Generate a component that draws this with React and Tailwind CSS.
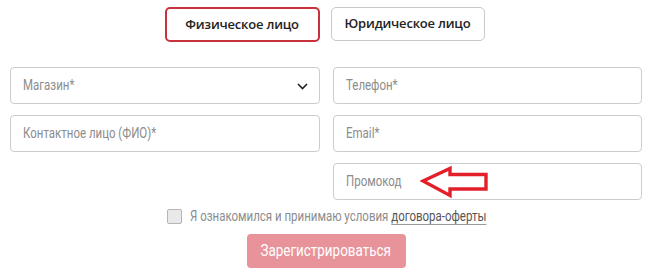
import React, { useState } from "react";

const base = { fontFamily: "Roboto, 'Liberation Sans', sans-serif" };
const tabFont = { fontFamily: "'Open Sans', 'Noto Sans', sans-serif", fontWeight: 600 };

// узкий шрифт в макете: сжимаем Roboto по горизонтали
const Narrow = ({ children, className = "" }) => (
  <span className={`inline-block whitespace-nowrap origin-left scale-x-[0.82] ${className}`}>{children}</span>
);

const Field = ({ placeholder, children }) => (
  <div className="relative h-[37px] rounded-[4px] border border-[#cccccc] bg-white flex items-center px-[12px]">
    <Narrow className="text-[14px] text-[#8c8c8c]">{placeholder}</Narrow>
    {children}
  </div>
);

const App = () => {
  const [type, setType] = useState("phys");

  return (
    <div className="w-[650px] h-[277px] bg-white overflow-hidden pt-[7px]" style={base}>
      {/* переключатель типа лица */}
      <div className="flex justify-center gap-[11px] pr-[1px]">
        <button
          onClick={() => setType("phys")}
          className={`w-[155px] h-[35px] rounded-[5px] bg-white text-[13px] tracking-[-0.2px] text-[#222] ${
            type === "phys" ? "border-2 border-[#c8323b]" : "border border-[#c8c8c8]"
          }`}
          style={tabFont}
        >
          Физическое лицо
        </button>
        <button
          onClick={() => setType("jur")}
          className={`w-[154px] h-[34px] rounded-[5px] bg-white text-[13px] tracking-[-0.2px] text-[#222] ${
            type === "jur" ? "border-2 border-[#c8323b]" : "border border-[#c8c8c8]"
          }`}
          style={tabFont}
        >
          Юридическое лицо
        </button>
      </div>

      <div className="mt-[25px] pl-[10px] grid grid-cols-[310px_309px] gap-x-[13px] gap-y-[11px]">
        <Field placeholder="Магазин*">
          <svg className="absolute right-[11px] top-[15px]" width="11" height="7" viewBox="0 0 11 7" fill="none">
            <path d="M1 1l4.5 4.5L10 1" stroke="#222" strokeWidth="1.6" />
          </svg>
        </Field>
        <Field placeholder="Телефон*" />
        <Field placeholder="Контактное лицо (ФИО)*" />
        <Field placeholder="Email*" />
        <div />
        <Field placeholder="Промокод">
          <svg className="absolute left-[86px] top-[1px]" width="70" height="34" viewBox="0 0 70 34" fill="none">
            {/* стрелка-указатель */}
            <polygon
              points="3,16 30,3.5 30,9.5 66,9.5 66,24 30,24 30,30.5"
              stroke="#e3202a"
              strokeWidth="3.4"
              strokeLinejoin="miter"
              fill="none"
            />
          </svg>
        </Field>
      </div>

      <label className="mt-[9px] h-[15px] flex items-center justify-center gap-[8px] pl-[4px] cursor-pointer">
        <span className="w-[15px] h-[15px] rounded-[2px] border border-[#b5b5b5] bg-[#e9e9e9]" />
        <span className="w-[297px] h-[15px] flex items-center">
          <Narrow className="text-[14px] leading-[15px] text-[#8c8c8c]">
            Я ознакомился и принимаю условия{" "}
            <span className="text-[#555] underline underline-offset-[3px] decoration-[#999]">договора-оферты</span>
          </Narrow>
        </span>
      </label>

      <div className="mt-[10px] flex justify-center pl-[2px]">
        <button className="w-[159px] h-[34px] rounded-[4px] bg-[#e8929a] text-white text-[16px] flex items-center justify-center">
          <span className="inline-block whitespace-nowrap scale-x-[0.84]">Зарегистрироваться</span>
        </button>
      </div>
    </div>
  );
};

export default App;
